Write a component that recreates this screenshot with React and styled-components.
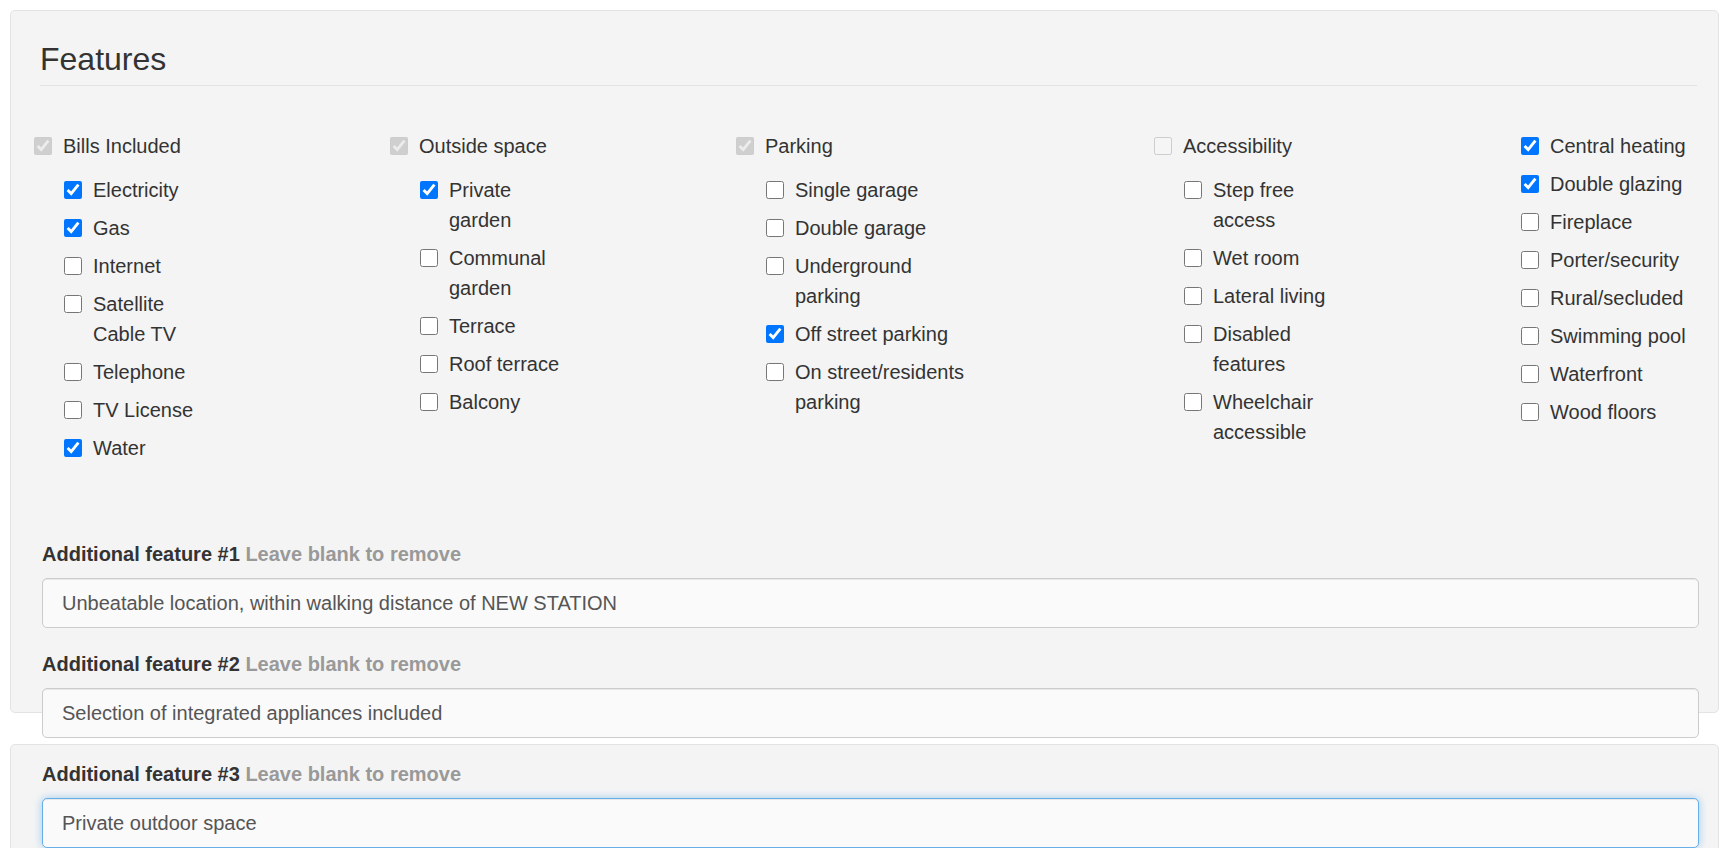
import React from "react";
import styled, { createGlobalStyle } from "styled-components";

const GlobalStyle = createGlobalStyle`
    html, body {
        margin: 0;
        padding: 0;
        background: #fff;
        overflow: hidden;
        font-family: "Liberation Sans", Arial, sans-serif;
        color: #333;
    }
`;

const columns = [
    {
        width: 356,
        text: 112,
        head: { label: "Bills Included", checked: true, disabled: true },
        items: [
            ["Electricity", true],
            ["Gas", true],
            ["Internet", false],
            ["Satellite Cable TV", false],
            ["Telephone", false],
            ["TV License", false],
            ["Water", true],
        ],
    },
    {
        width: 346,
        text: 120,
        head: { label: "Outside space", checked: true, disabled: true },
        items: [
            ["Private garden", true],
            ["Communal garden", false],
            ["Terrace", false],
            ["Roof terrace", false],
            ["Balcony", false],
        ],
    },
    {
        width: 418,
        text: 182,
        head: { label: "Parking", checked: true, disabled: true },
        items: [
            ["Single garage", false],
            ["Double garage", false],
            ["Underground parking", false],
            ["Off street parking", true],
            ["On street/residents parking", false],
        ],
    },
    {
        width: 367,
        text: 125,
        head: { label: "Accessibility", checked: false, disabled: true },
        items: [
            ["Step free access", false],
            ["Wet room", false],
            ["Lateral living", false],
            ["Disabled features", false],
            ["Wheelchair accessible", false],
        ],
    },
];

const extras = [
    ["Central heating", true],
    ["Double glazing", true],
    ["Fireplace", false],
    ["Porter/security", false],
    ["Rural/secluded", false],
    ["Swimming pool", false],
    ["Waterfront", false],
    ["Wood floors", false],
];

const additional = [
    "Unbeatable location, within walking distance of NEW STATION",
    "Selection of integrated appliances included",
    "Private outdoor space",
];

function Check({ label, checked, disabled, text }) {
    return (
        <CheckRow>
            <Box type="checkbox" defaultChecked={checked} disabled={disabled} />
            <CheckText $w={text}>{label}</CheckText>
        </CheckRow>
    );
}

export default function App() {
    return (
        <>
            <GlobalStyle />
            <Page>
                <Panel $h={703}>
                    <Content>
                        <Title>Features</Title>
                        <Columns>
                            {columns.map((col) => (
                                <Column key={col.head.label} $w={col.width}>
                                    <Check {...col.head} />
                                    <Children>
                                        {col.items.map(([label, checked]) => (
                                            <Check
                                                key={label}
                                                label={label}
                                                checked={checked}
                                                text={col.text}
                                            />
                                        ))}
                                    </Children>
                                </Column>
                            ))}
                            <ExtraList>
                                {extras.map(([label, checked]) => (
                                    <Check
                                        key={label}
                                        label={label}
                                        checked={checked}
                                        text={141}
                                    />
                                ))}
                            </ExtraList>
                        </Columns>

                        <Additional>
                            {additional.map((value, i) => (
                                <Field key={i}>
                                    <FieldLabel>
                                        Additional feature #{i + 1}{" "}
                                        <Hint>Leave blank to remove</Hint>
                                    </FieldLabel>
                                    <TextInput
                                        defaultValue={value}
                                        $focused={i === 2}
                                    />
                                </Field>
                            ))}
                        </Additional>
                    </Content>
                </Panel>
                <Panel $h={200} />
            </Page>
        </>
    );
}

const Page = styled.div`
    padding: 10px 17px 0 10px;
    display: flex;
    flex-direction: column;
    gap: 31px;
`;

const Panel = styled.div`
    box-sizing: border-box;
    height: ${(p) => p.$h}px;
    background: #f4f4f4;
    border: 1px solid #e3e3e3;
    border-radius: 5px;
    padding: 0 21px 0 29px;
`;

const Content = styled.div`
    position: relative;
    z-index: 1;
`;

const Title = styled.h3`
    margin: 0;
    padding: 31px 0 8px;
    font-size: 32px;
    font-weight: 400;
    line-height: 1.1;
    color: #333;
    border-bottom: 1px solid #e2e2e2;
`;

const Columns = styled.div`
    display: flex;
    margin: 45px 0 0 -6px;
`;

const Column = styled.div`
    width: ${(p) => p.$w}px;
    flex-shrink: 0;
`;

const Children = styled.div`
    margin-top: 14px;
    padding-left: 30px;
    display: flex;
    flex-direction: column;
    gap: 8px;
`;

const ExtraList = styled.div`
    flex: 1;
    display: flex;
    flex-direction: column;
    gap: 8px;
`;

const CheckRow = styled.label`
    display: flex;
    align-items: flex-start;
    font-size: 20px;
    line-height: 30px;
    color: #333;
`;

const Box = styled.input`
    width: 18px;
    height: 18px;
    margin: 6px 11px 0 0;
    flex-shrink: 0;
`;

const CheckText = styled.span`
    max-width: ${(p) => (p.$w ? `${p.$w}px` : "none")};
`;

const Additional = styled.div`
    margin-top: 76px;
    display: flex;
    flex-direction: column;
    gap: 21px;
`;

const Field = styled.div`
    display: flex;
    flex-direction: column;
    gap: 9px;
`;

const FieldLabel = styled.div`
    font-size: 20px;
    line-height: 30px;
    font-weight: 700;
    color: #333;
    padding-left: 2px;
`;

const Hint = styled.span`
    color: #999;
`;

const TextInput = styled.input`
    box-sizing: border-box;
    width: 100%;
    height: 50px;
    margin: 0 0 0 2px;
    padding: 0 19px;
    font-family: "Liberation Sans", Arial, sans-serif;
    font-size: 20px;
    color: #555;
    background: #fafafa;
    border: 1px solid ${(p) => (p.$focused ? "#66afe9" : "#cccccc")};
    border-radius: 5px;
    outline: none;
    box-shadow: ${(p) =>
        p.$focused
            ? "inset 0 1px 1px rgba(0,0,0,.075), 0 0 8px rgba(102,175,233,.6)"
            : "inset 0 1px 1px rgba(0,0,0,.075)"};
`;
